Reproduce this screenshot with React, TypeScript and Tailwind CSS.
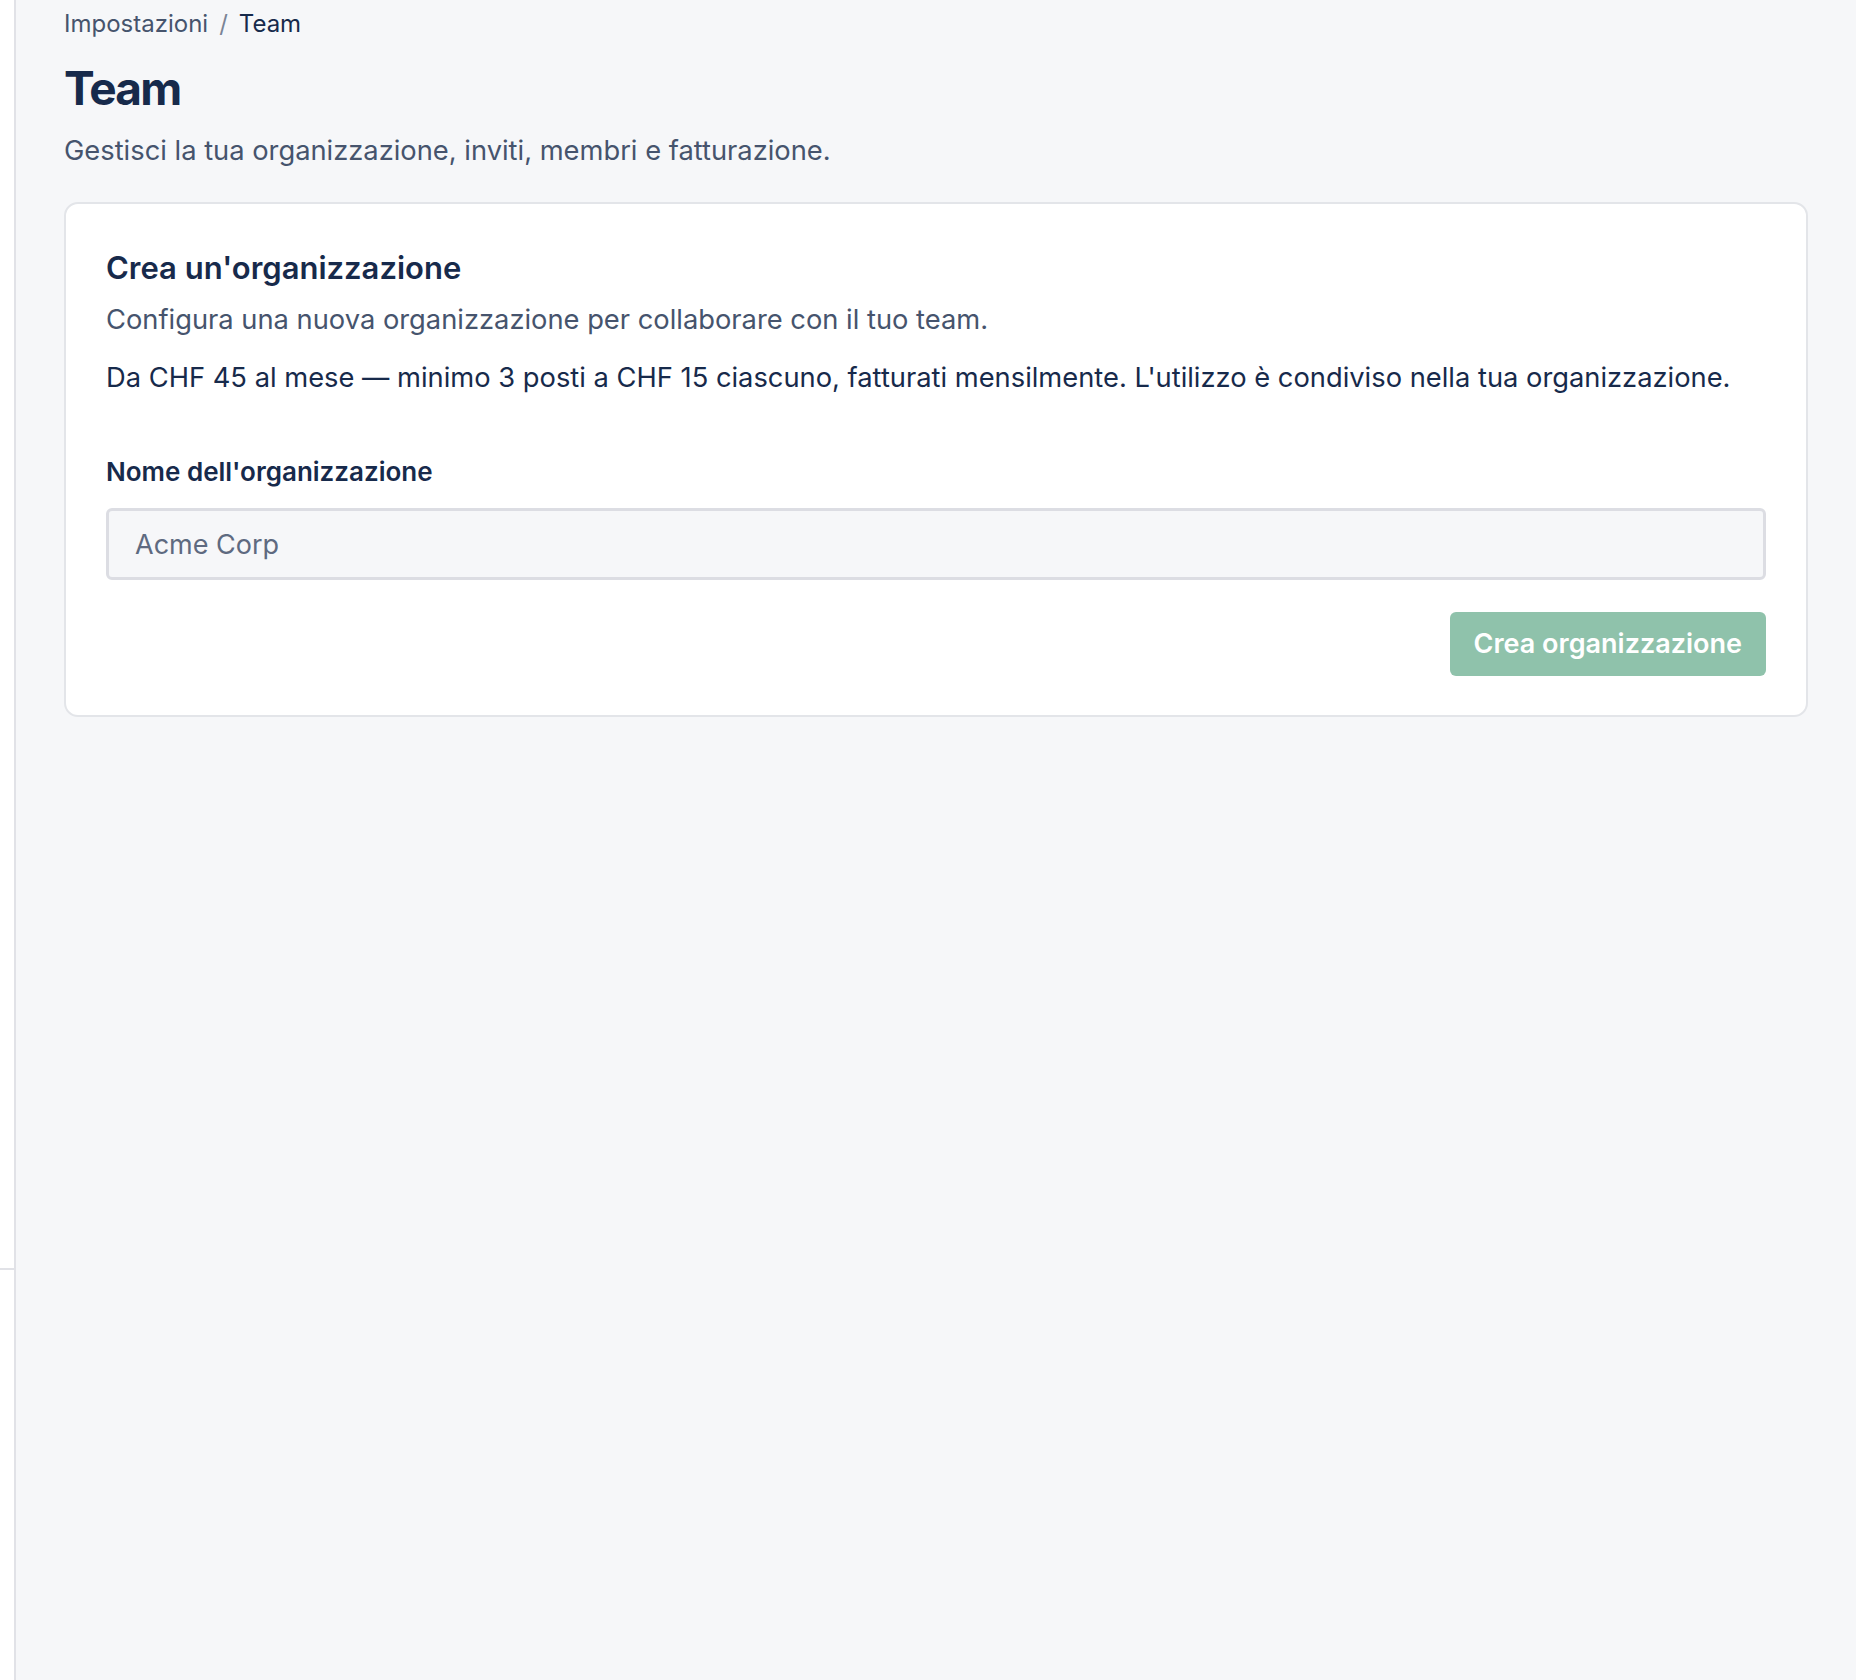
const font = { fontFamily: "Inter, 'Noto Sans', sans-serif" };

function Sidebar() {
  return (
    <aside className="w-[16px] shrink-0 bg-white border-r-2 border-[#e1e2e7] flex flex-col">
      <div className="h-[1270px] border-b-2 border-[#e1e2e7]" />
      <div className="flex-1" />
    </aside>
  );
}

export default function App() {
  return (
    <div className="flex min-h-[1680px] bg-[#f6f7f9] text-[#172a4b]" style={font}>
      <Sidebar />
      <main className="flex-1 pl-[48px] pr-[48px] pt-[8px]">
        {/* Breadcrumb */}
        <nav className="flex items-center gap-[11px] text-[24px] leading-[32px]">
          <span className="text-[#46546d]">Impostazioni</span>
          <span className="text-[#7a8496]">/</span>
          <span className="text-[#172a4b]">Team</span>
        </nav>

        <h1 className="mt-[20px] text-[46px] leading-[56px] font-bold tracking-[-0.04em]">Team</h1>
        <p className="mt-[17px] text-[27.3px] leading-[36px] text-[#46546d]">
          Gestisci la tua organizzazione, inviti, membri e fatturazione.
        </p>

        {/* Create organization card */}
        <section className="mt-[33px] bg-white border-2 border-[#e3e5e9] rounded-[14px] px-[40px] pt-[44px] pb-[39px]">
          <h2 className="text-[31px] leading-[40px] font-semibold">Crea un'organizzazione</h2>
          <p className="mt-[14px] text-[27.3px] leading-[36px] text-[#46546d]">
            Configura una nuova organizzazione per collaborare con il tuo team.
          </p>
          <p className="mt-[22px] text-[27.3px] leading-[36px] text-[#172a4b]">
            Da CHF 45 al mese — minimo 3 posti a CHF 15 ciascuno, fatturati mensilmente. L'utilizzo è condiviso nella tua organizzazione.
          </p>

          <label className="block mt-[60px] text-[26px] leading-[32px] font-semibold">
            Nome dell'organizzazione
          </label>
          <input
            className="mt-[20px] w-full h-[72px] rounded-[6px] border-[3px] border-[#dcdde3] bg-[#f6f7f9] px-[26px] text-[27px] text-[#172a4b] placeholder:text-[#5e6a80] outline-none"
            placeholder="Acme Corp"
          />

          <div className="mt-[32px] flex justify-end">
            <button className="h-[64px] px-[24px] rounded-[6px] bg-[#8fc2ab] text-white text-[27px] font-semibold">
              Crea organizzazione
            </button>
          </div>
        </section>
      </main>
    </div>
  );
}
